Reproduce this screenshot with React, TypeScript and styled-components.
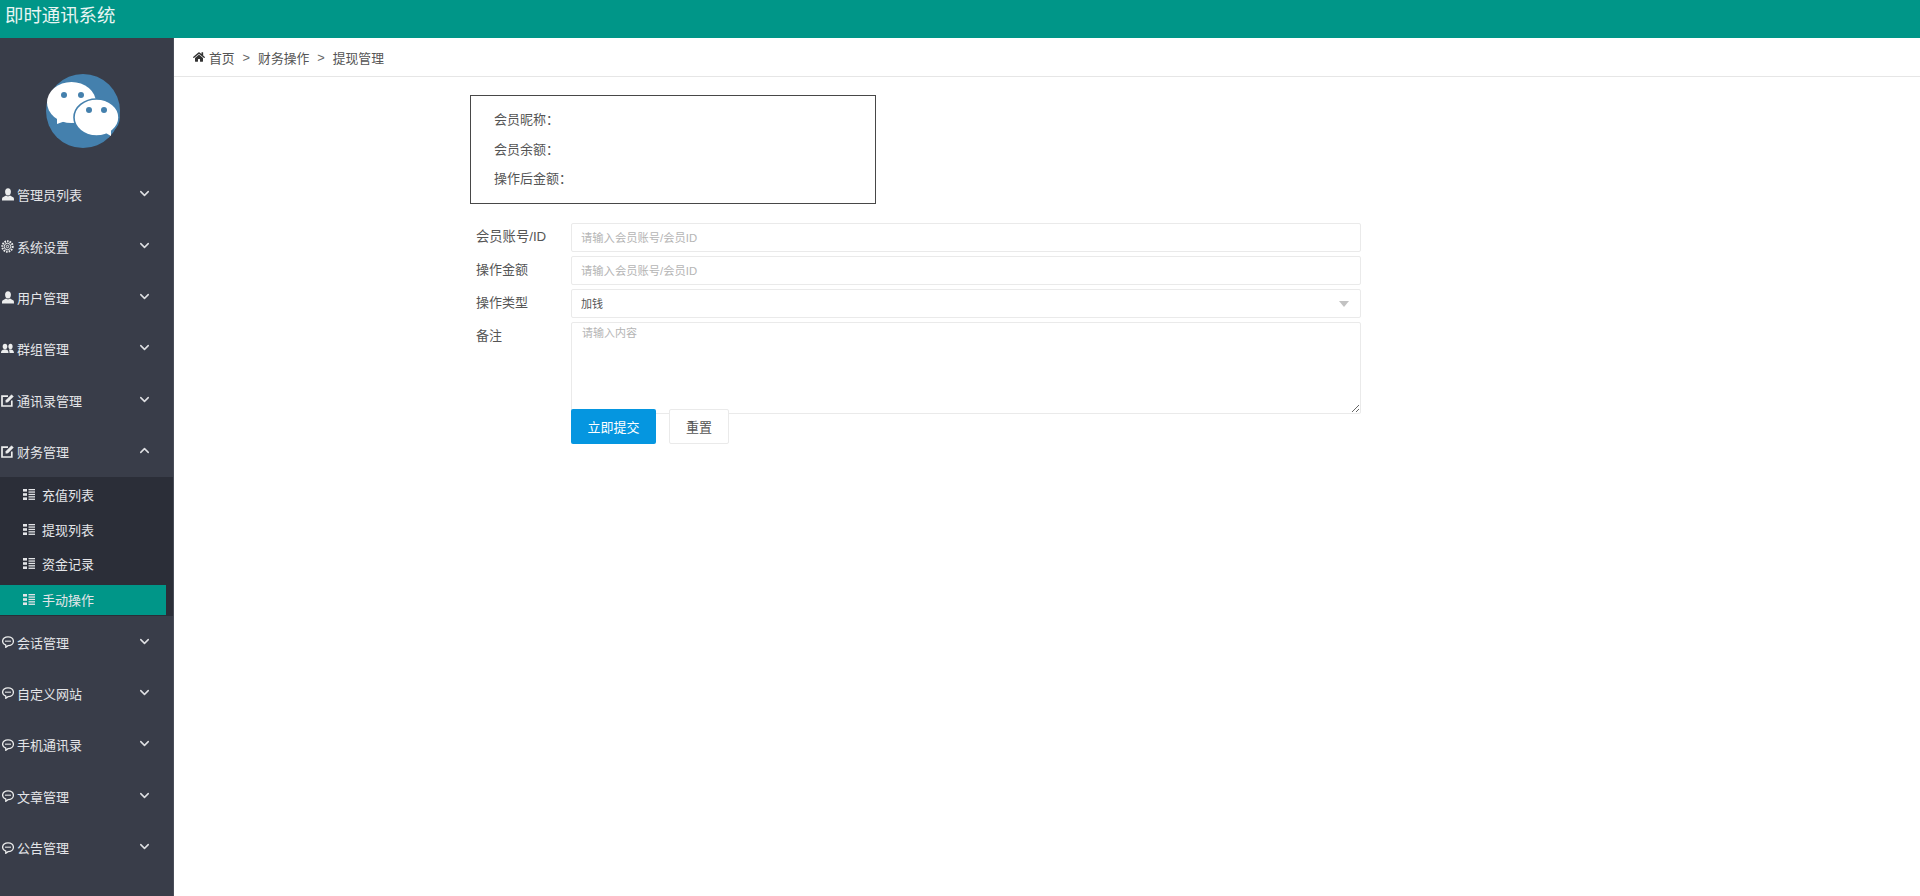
import React from "react";
import styled, { createGlobalStyle } from "styled-components";
import { FaHome } from "react-icons/fa";
import { ChevronDown, ChevronUp } from "lucide-react";

const FONT = `"Liberation Sans", "Noto Sans CJK SC", sans-serif`;

const GlobalStyle = createGlobalStyle`
  html, body {
    margin: 0;
    padding: 0;
    background: #fff;
    font-family: ${FONT};
    overflow: hidden;
  }
  * { box-sizing: border-box; }
`;

const Page = styled.div`
  width: 1920px;
  height: 896px;
  display: flex;
  flex-direction: column;
`;

const TopBar = styled.header`
  height: 38px;
  flex: none;
  background: #009688;
  color: #e8f5f3;
  font-size: 18.4px;
  line-height: 32px;
  padding-left: 5px;
`;

const Body = styled.div`
  flex: 1;
  display: flex;
  min-height: 0;
`;

const Sidebar = styled.aside`
  width: 174px;
  flex: none;
  background: #393d49;
  border-right: 1px solid #4a4e59;
  color: #e4e5e8;
`;

const LogoWrap = styled.div`
  height: 131px;
  padding: 36px 0 0 46px;
`;

const MenuRow = styled.div`
  height: 51.4px;
  display: flex;
  align-items: center;
  padding: 0 21px 0 1px;
  font-size: 13px;
  gap: 3px;
`;

const IconSlot = styled.span`
  width: 13px;
  height: 13px;
  display: flex;
  align-items: center;
  justify-content: center;
  flex: none;
  color: #eceded;
`;

const MenuLabel = styled.span`
  flex: 1;
`;

const Chevron = styled.span`
  display: flex;
  margin-top: -2px;
  color: #dfe0e3;
`;

const SubMenu = styled.div`
  background: #2b2e38;
  height: 139px;
`;

const SubRow = styled.div<{ $active?: boolean }>`
  height: ${(p) => (p.$active ? "30px" : "34.6px")};
  margin: ${(p) => (p.$active ? "3.5px 7px 0 0" : "0")};
  display: flex;
  align-items: center;
  gap: 7px;
  padding-left: 23px;
  font-size: 13px;
  color: #e4e5e8;
  background: ${(p) => (p.$active ? "#009688" : "transparent")};
`;

const Main = styled.main`
  flex: 1;
  min-width: 0;
`;

const Breadcrumb = styled.nav`
  height: 39px;
  border-bottom: 1px solid #e6e6e6;
  display: flex;
  align-items: center;
  padding-left: 19px;
  font-size: 12.8px;
  color: #555;
`;

const CrumbHome = styled.span`
  display: flex;
  align-items: center;
  gap: 4px;
`;

const HomeIcon = styled(FaHome)`
  color: #333;
  font-size: 12px;
`;

const CrumbSep = styled.span`
  margin: 0 8px;
  color: #666;
`;

const Content = styled.div`
  padding: 18px 0 0 296px;
`;

const InfoBox = styled.section`
  width: 406px;
  height: 109px;
  border: 1.5px solid #484848;
  padding: 14px 0 0 23px;
  display: flex;
  flex-direction: column;
  font-size: 13px;
  color: #555;
`;

const InfoLine = styled.div`
  height: 29.7px;
  line-height: 20px;
`;

const Form = styled.form`
  width: 891px;
  margin-top: 19px;
  display: flex;
  flex-direction: column;
  gap: 4px;
`;

const FormRow = styled.div`
  display: flex;
`;

const Label = styled.label`
  width: 101px;
  flex: none;
  padding: 5px 0 0 6px;
  font-size: 13px;
  line-height: 18px;
  color: #555;
`;

const WideLabel = styled(Label)`
  font-size: 13.3px;
`;

const TextInput = styled.input`
  width: 790px;
  height: 29px;
  border: 1px solid #eaeaea;
  border-radius: 2px;
  padding: 0 9px;
  font-family: ${FONT};
  font-size: 11.3px;
  color: #555;
  outline: none;
  &::placeholder {
    color: #b5b5b5;
  }
`;

const SelectWrap = styled.div`
  position: relative;
  width: 790px;
  height: 29px;
`;

const Select = styled.select`
  width: 100%;
  height: 100%;
  appearance: none;
  background: #fff;
  border: 1px solid #eaeaea;
  border-radius: 2px;
  padding: 0 9px;
  font-family: ${FONT};
  font-size: 11px;
  color: #555;
  outline: none;
`;

const Caret = styled.span`
  position: absolute;
  right: 12px;
  top: 12px;
  width: 0;
  height: 0;
  border-left: 5px solid transparent;
  border-right: 5px solid transparent;
  border-top: 6px solid #c2c2c2;
`;

const TextArea = styled.textarea`
  width: 790px;
  height: 92px;
  border: 1px solid #eaeaea;
  border-radius: 2px;
  padding: 1px 10px;
  font-family: ${FONT};
  font-size: 11px;
  color: #555;
  outline: none;
  resize: vertical;
  display: block;
  &::placeholder {
    color: #b5b5b5;
  }
`;

const Actions = styled.div`
  display: flex;
  gap: 13px;
  margin: -9px 0 0 101px;
  position: relative;
`;

const PrimaryButton = styled.button`
  width: 85px;
  height: 35px;
  border: none;
  border-radius: 2px;
  background: #0596e0;
  color: #fff;
  font-family: ${FONT};
  font-size: 13px;
`;

const ResetButton = styled.button`
  width: 60px;
  height: 35px;
  border: 1px solid #eaeaea;
  border-radius: 2px;
  background: #fff;
  color: #555;
  font-family: ${FONT};
  font-size: 13px;
`;

const Logo = () => (
  <svg width="74" height="74" viewBox="0 0 74 74">
    <circle cx="37" cy="37" r="37" fill="#4480ad" />
    <ellipse cx="25.500" cy="28.500" rx="24.500" ry="20.500" fill="#fff" />
    <path d="M11 43 L11 50 L22 46 Z" fill="#fff" />
    <ellipse cx="50.500" cy="43.500" rx="22.500" ry="18.500" fill="#fff" stroke="#4480ad" strokeWidth="1.600" />
    <path d="M58 58 L65 62 L65 54 Z" fill="#fff" />
    <circle cx="18" cy="21" r="3" fill="#4480ad" />
    <circle cx="35" cy="21" r="3" fill="#4480ad" />
    <circle cx="43" cy="36" r="3" fill="#4480ad" />
    <circle cx="58" cy="36" r="3" fill="#4480ad" />
  </svg>
);

const UserIcon = () => (
  <svg width="12" height="13" viewBox="0 0 12 13" fill="currentColor">
    <ellipse cx="6" cy="3.800" rx="2.900" ry="3.600" />
    <path d="M4 7.500 L0.500 9.500 C0 10 0 11.500 0 12.500 L12 12.500 C12 11.500 12 10 11.500 9.500 L8 7.500 L6 8.500 Z" />
  </svg>
);

const GroupIcon = () => (
  <svg width="13" height="11" viewBox="0 0 13 11" fill="currentColor">
    <ellipse cx="4" cy="3.500" rx="2.300" ry="2.800" />
    <ellipse cx="9.500" cy="3.500" rx="2.100" ry="2.800" />
    <path d="M0 10 C0 7 2 6.500 4 6.500 C6 6.500 7.500 7 7.500 10 Z" />
    <path d="M8.500 10 C8.500 8.500 8.300 7.300 7.800 6.800 C9.800 6 13 6.500 13 10 Z" />
  </svg>
);

const GearIcon = () => (
  <svg width="13" height="13" viewBox="0 0 13 13" fill="none" stroke="currentColor">
    <circle cx="6.500" cy="6.500" r="5.200" strokeWidth="2" strokeDasharray="1.600 1" />
    <circle cx="6.500" cy="6.500" r="3.200" strokeWidth="1" />
    <circle cx="6.500" cy="6.500" r="1.200" strokeWidth="1" />
  </svg>
);

const EditIcon = () => (
  <svg width="13" height="13" viewBox="0 0 13 13" fill="none" stroke="currentColor">
    <path d="M7 2.200 H1 V12 H10.800 V6.500" strokeWidth="1.700" />
    <path d="M4.800 8.300 L5 6.200 L10.500 0.700 L12.400 2.600 L6.900 8.100 Z" fill="currentColor" strokeWidth="0.500" />
  </svg>
);

const BubbleIcon = () => (
  <svg width="12" height="12" viewBox="0 0 12 12" fill="none" stroke="currentColor">
    <path d="M6 .8 C9 .8 11.400 2.700 11.400 5.300 C11.400 7.900 9 9.700 6 9.700 L3.800 11.300 L3.800 9.200 C2 8.500 .6 7 .6 5.300 C.6 2.700 3 .8 6 .8 Z" strokeWidth="1.300" />
    <path d="M3.300 5.300 H8.700" strokeWidth="1.600" strokeDasharray="1.400 .6" />
  </svg>
);

const ListIcon = () => (
  <svg width="12" height="11" viewBox="0 0 12 11" fill="currentColor">
    <rect x="0" y="0" width="4" height="2.600" />
    <rect x="5.500" y="0" width="6.500" height="1.300" />
    <rect x="5.500" y="2.400" width="6.500" height="1.300" />
    <rect x="0" y="4.200" width="4" height="2.600" />
    <rect x="5.500" y="4.800" width="6.500" height="1.300" />
    <rect x="0" y="8.400" width="4" height="2.600" />
    <rect x="5.500" y="7.200" width="6.500" height="1.300" />
    <rect x="5.500" y="9.600" width="6.500" height="1.300" />
  </svg>
);

type MenuEntry = { label: string; icon: React.ReactNode };

const topMenu: MenuEntry[] = [
  { label: "管理员列表", icon: <UserIcon /> },
  { label: "系统设置", icon: <GearIcon /> },
  { label: "用户管理", icon: <UserIcon /> },
  { label: "群组管理", icon: <GroupIcon /> },
  { label: "通讯录管理", icon: <EditIcon /> },
];

const bottomMenu: MenuEntry[] = [
  { label: "会话管理", icon: <BubbleIcon /> },
  { label: "自定义网站", icon: <BubbleIcon /> },
  { label: "手机通讯录", icon: <BubbleIcon /> },
  { label: "文章管理", icon: <BubbleIcon /> },
  { label: "公告管理", icon: <BubbleIcon /> },
];

const subMenu = ["充值列表", "提现列表", "资金记录", "手动操作"];

function Row({ item, open }: { item: MenuEntry; open?: boolean }) {
  return (
    <MenuRow>
      <IconSlot>{item.icon}</IconSlot>
      <MenuLabel>{item.label}</MenuLabel>
      <Chevron>
        {open ? <ChevronUp size={15} strokeWidth={2.4} /> : <ChevronDown size={15} strokeWidth={2.4} />}
      </Chevron>
    </MenuRow>
  );
}

export default function App() {
  return (
    <Page>
      <GlobalStyle />
      <TopBar>即时通讯系统</TopBar>
      <Body>
        <Sidebar>
          <LogoWrap>
            <Logo />
          </LogoWrap>
          {topMenu.map((item) => (
            <Row key={item.label} item={item} />
          ))}
          <Row item={{ label: "财务管理", icon: <EditIcon /> }} open />
          <SubMenu>
            {subMenu.map((label) => (
              <SubRow key={label} $active={label === "手动操作"}>
                <ListIcon />
                {label}
              </SubRow>
            ))}
          </SubMenu>
          {bottomMenu.map((item) => (
            <Row key={item.label} item={item} />
          ))}
        </Sidebar>
        <Main>
          <Breadcrumb>
            <CrumbHome>
              <HomeIcon />
              首页
            </CrumbHome>
            <CrumbSep>&gt;</CrumbSep>
            财务操作
            <CrumbSep>&gt;</CrumbSep>
            提现管理
          </Breadcrumb>
          <Content>
            <InfoBox>
              <InfoLine>会员昵称：</InfoLine>
              <InfoLine>会员余额：</InfoLine>
              <InfoLine>操作后金额：</InfoLine>
            </InfoBox>
            <Form>
              <FormRow>
                <WideLabel>会员账号/ID</WideLabel>
                <TextInput placeholder="请输入会员账号/会员ID" />
              </FormRow>
              <FormRow>
                <Label>操作金额</Label>
                <TextInput placeholder="请输入会员账号/会员ID" />
              </FormRow>
              <FormRow>
                <Label>操作类型</Label>
                <SelectWrap>
                  <Select defaultValue="add">
                    <option value="add">加钱</option>
                    <option value="sub">减钱</option>
                  </Select>
                  <Caret />
                </SelectWrap>
              </FormRow>
              <FormRow>
                <Label>备注</Label>
                <TextArea placeholder="请输入内容" />
              </FormRow>
              <Actions>
                <PrimaryButton type="button">立即提交</PrimaryButton>
                <ResetButton type="button">重置</ResetButton>
              </Actions>
            </Form>
          </Content>
        </Main>
      </Body>
    </Page>
  );
}
